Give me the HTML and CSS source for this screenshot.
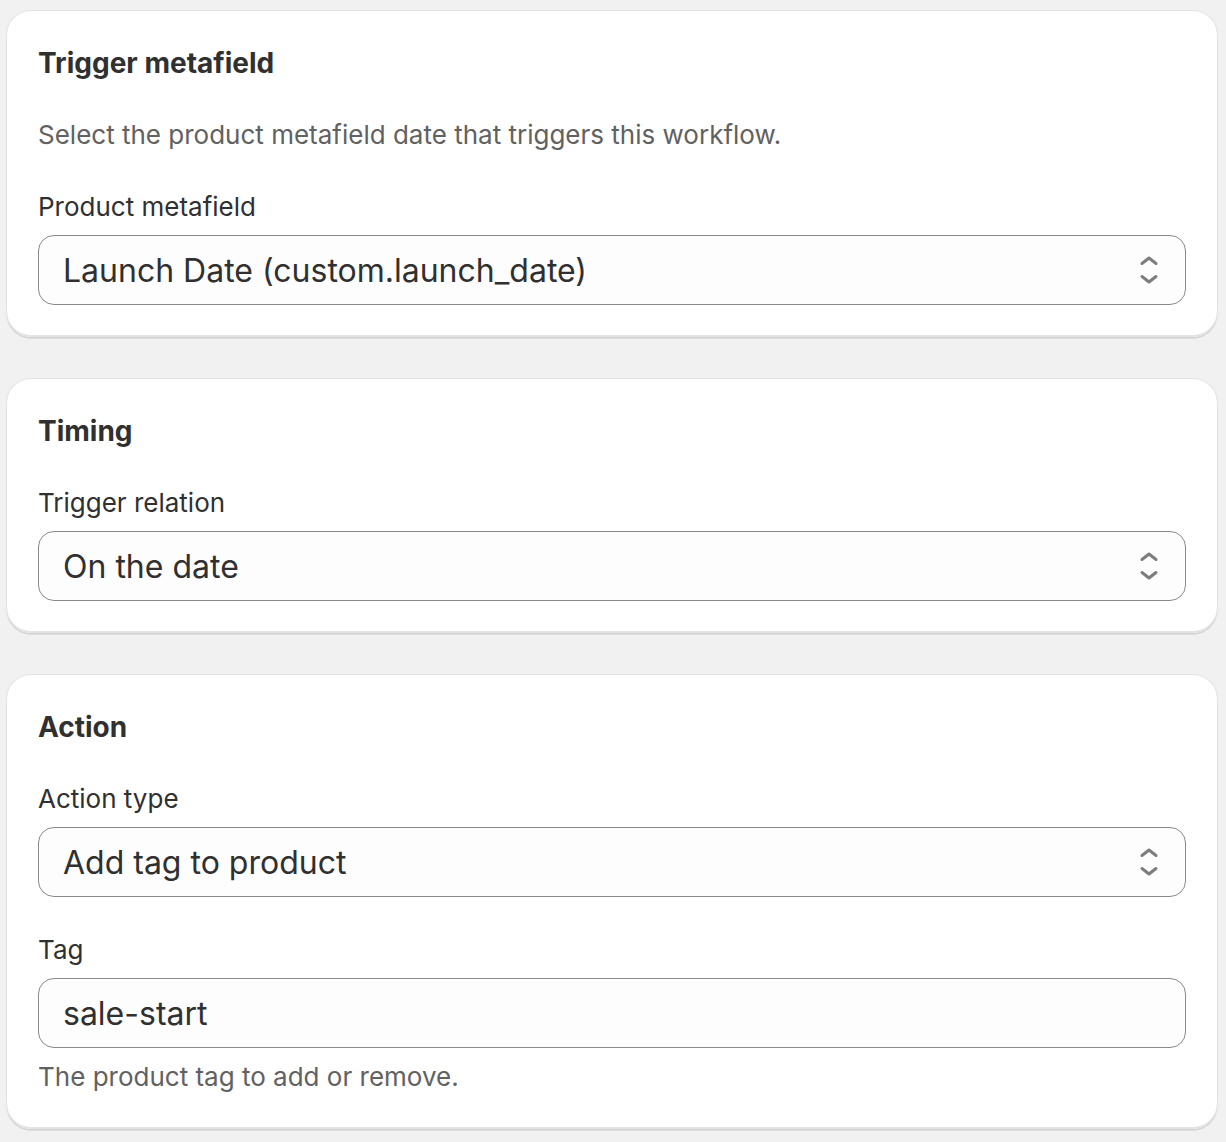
FILE: index.html
```html
<!DOCTYPE html>
<html lang="en">
<head>
    <meta charset="UTF-8">
    <title>Workflow settings</title>
    <link rel="stylesheet" href="styles.css">
</head>
<body>
    <div class="page">
        <!-- Trigger -->
        <section class="card">
            <h2 class="card-title">Trigger metafield</h2>
            <p class="card-text">Select the product metafield date that triggers this workflow.</p>
            <div class="field">
                <label class="field-label">Product metafield</label>
                <div class="select">
                    <span class="select-value">Launch Date (custom.launch_date)</span>
                    <svg class="select-icon" viewBox="0 0 20 20" width="40" height="40"><path d="M6.5 6.75 10 4 13.5 6.75M6.5 13.25 10 16 13.5 13.25" fill="none" stroke="currentColor" stroke-width="1.5" stroke-linecap="round" stroke-linejoin="round"/></svg>
                </div>
            </div>
        </section>

        <!-- Timing -->
        <section class="card">
            <h2 class="card-title">Timing</h2>
            <div class="field">
                <label class="field-label">Trigger relation</label>
                <div class="select">
                    <span class="select-value">On the date</span>
                    <svg class="select-icon" viewBox="0 0 20 20" width="40" height="40"><path d="M6.5 6.75 10 4 13.5 6.75M6.5 13.25 10 16 13.5 13.25" fill="none" stroke="currentColor" stroke-width="1.5" stroke-linecap="round" stroke-linejoin="round"/></svg>
                </div>
            </div>
        </section>

        <!-- Action -->
        <section class="card">
            <h2 class="card-title">Action</h2>
            <div class="field">
                <label class="field-label">Action type</label>
                <div class="select">
                    <span class="select-value">Add tag to product</span>
                    <svg class="select-icon" viewBox="0 0 20 20" width="40" height="40"><path d="M6.5 6.75 10 4 13.5 6.75M6.5 13.25 10 16 13.5 13.25" fill="none" stroke="currentColor" stroke-width="1.5" stroke-linecap="round" stroke-linejoin="round"/></svg>
                </div>
            </div>
            <div class="field">
                <label class="field-label">Tag</label>
                <div class="select">
                    <span class="select-value">sale-start</span>
                </div>
                <p class="field-help">The product tag to add or remove.</p>
            </div>
        </section>
    </div>
</body>
</html>
```

FILE: styles.css
```css
body {
    margin: 0;
    background-color: #f1f1f1;
    font-family: 'Inter', 'Liberation Sans', sans-serif;
    color: #303030;
}
.page {
    padding: 11px 9px 8px 7px;
    display: flex;
    flex-direction: column;
    gap: 42px;
}
.card {
    background: white;
    border-radius: 24px;
    padding: 32px 31px 32px 31px;
    box-shadow: 0 2px 0 0 rgba(0, 0, 0, 0.08), 0 0 0 1px rgba(0, 0, 0, 0.06), inset 0 -2px 0 0 #e3e3e3;
    display: flex;
    flex-direction: column;
    gap: 32px;
}
.card-title {
    margin: 0;
    font-size: 28px;
    font-weight: 650;
    line-height: 40px;
}
.card-text {
    margin: 0;
    font-size: 26px;
    line-height: 40px;
    color: #616161;
}
.field {
    display: flex;
    flex-direction: column;
    gap: 8px;
}
.field + .field {
    margin-top: 1px;
}
.field-label {
    font-size: 26px;
    line-height: 40px;
}
.select {
    height: 70px;
    box-sizing: border-box;
    border: 1.5px solid #8a8a8a;
    border-radius: 16px;
    background: #fdfdfd;
    padding: 0 24px;
    display: flex;
    align-items: center;
    justify-content: space-between;
}
.select-value {
    font-size: 32px;
}
.select-icon {
    color: #7d7d7d;
    margin-right: -8px;
}
.field-help {
    margin: 1px 0 0;
    font-size: 26px;
    line-height: 40px;
    color: #616161;
}
```
